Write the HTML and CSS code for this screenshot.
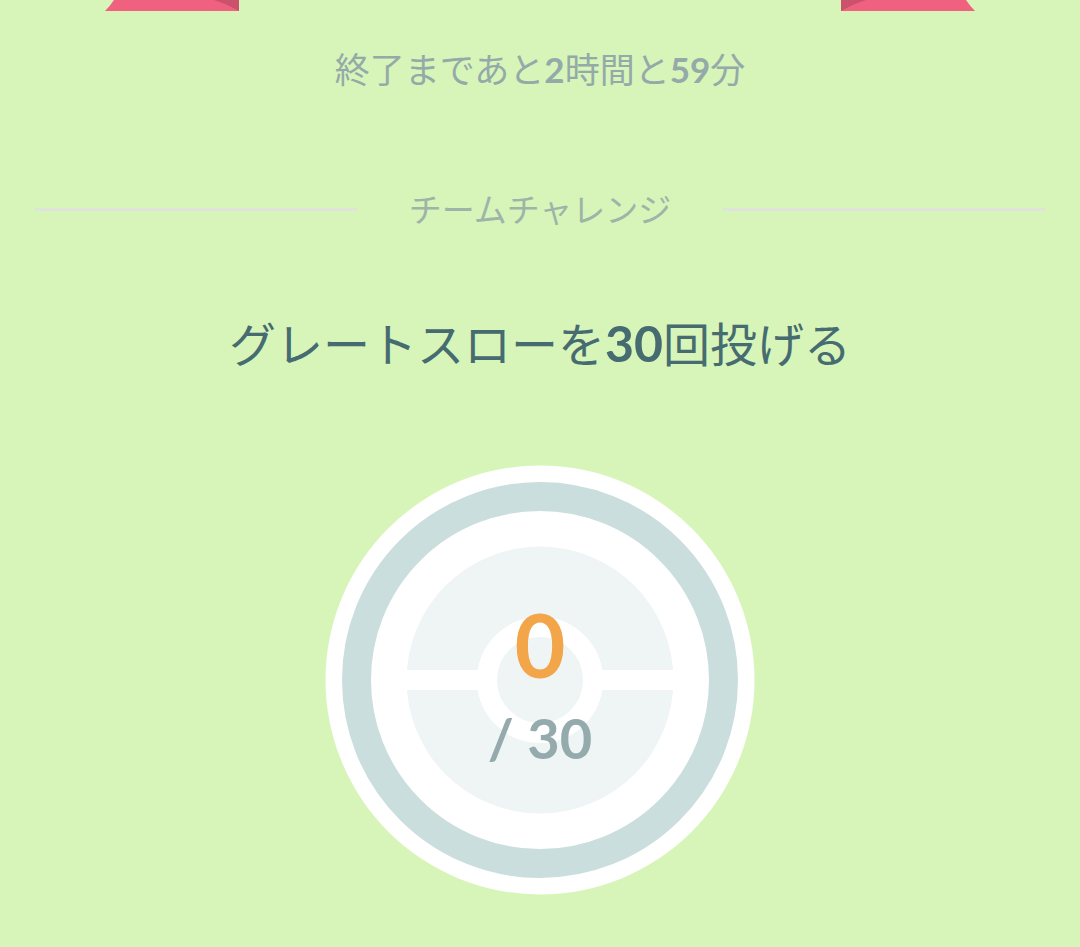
FILE: index.html
```html
<!DOCTYPE html>
<html lang="ja">
<head>
<meta charset="utf-8">
<meta name="viewport" content="width=device-width, initial-scale=1">
<title>チームチャレンジ</title>
<link rel="stylesheet" href="styles.css">
</head>
<body>
<main class="challenge">
  <div class="ribbons" aria-hidden="true">
    <svg class="ribbon" viewBox="0 0 134 11"><path fill="#f0617f" d="M9 0H134V11H0Q5 6 9 0Z"/><path fill="#cb526c" d="M109 0H134V11Q122 4 109 0Z"/></svg>
    <svg class="ribbon" viewBox="0 0 134 11"><path fill="#f0617f" d="M0 0H125Q129 6 134 11H0Z"/><path fill="#cb526c" d="M0 0H25Q12 4 0 11Z"/></svg>
  </div>
  <p class="remaining">終了まであと<b>2</b>時間と<b>59</b>分</p>
  <h2 class="section">チームチャレンジ</h2>
  <h1 class="goal">グレートスローを<b>30</b>回投げる</h1>
  <div class="progress">
    <svg class="dial" viewBox="0 0 430 430" aria-hidden="true">
      <circle cx="215" cy="215" r="214.500" fill="#fff"/>
      <circle cx="215" cy="215" r="183.500" fill="none" stroke="#cadedd" stroke-width="29"/>
      <circle cx="215" cy="215" r="133.500" fill="#eff5f5"/>
      <path d="M80 215H350" stroke="#fff" stroke-width="20"/>
      <circle cx="215" cy="215" r="53" fill="#eff5f5" stroke="#fff" stroke-width="20"/>
    </svg>
    <div class="score"><span class="count">0</span><span class="total">/ 30</span></div>
  </div>
</main>
</body>
</html>
```
FILE: styles.css
```css
* { box-sizing: border-box; }
body {
  margin: 0;
  background: #d7f5b8;
  font-family: Lato, "Noto Sans CJK JP", sans-serif;
}
.challenge {
  display: flex;
  flex-direction: column;
  align-items: center;
  min-height: 100vh;
}
.ribbons {
  display: flex;
  justify-content: space-between;
  width: 100%;
  padding: 0 105px;
}
.ribbon { display: block; width: 134px; height: 11px; }
.remaining {
  margin: 33px 0 0;
  color: #94aaa9;
  font-size: 35px;
  line-height: 50px;
}
.section {
  display: flex;
  align-items: center;
  gap: 52px;
  width: 100%;
  margin: 90px 0 0;
  padding: 0 35px;
  color: #9fb4a9;
  font-size: 33px;
  font-weight: 400;
  line-height: 50px;
}
.section::before, .section::after {
  content: "";
  flex: 1;
  height: 3px;
  background: #e0e2dc;
}
.goal {
  margin: 75px 0 0;
  color: #466b70;
  font-size: 47px;
  font-weight: 400;
  line-height: 70px;
}
.goal b { font-size: 50px; line-height: 1; }
.progress {
  display: grid;
  place-items: center;
  margin-top: 86px;
}
.dial, .score { grid-area: 1 / 1; }
.dial { display: block; width: 430px; height: 430px; }
.score {
  display: flex;
  flex-direction: column;
  align-items: center;
  padding-top: 8px;
  font-weight: 700;
}
.count { color: #f3a54a; font-size: 88px; line-height: 108px; }
.total { color: #94aaac; font-size: 56px; line-height: 80px; }
```
